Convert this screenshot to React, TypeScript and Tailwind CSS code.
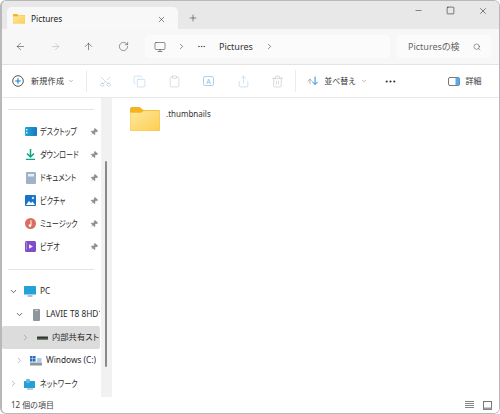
import React from "react";
import { ArrowLeft, ArrowRight, ArrowUp, RotateCw, ChevronRight, ChevronDown, Ellipsis, Search, X, Plus, Minus, Square, Scissors, Copy, Clipboard, Share, Trash2, Monitor, Pin } from "lucide-react";

const font = "[font-family:'Noto_Sans','Noto_Sans_CJK_JP',sans-serif] [font-feature-settings:'palt']";

function Folder({ s = 16 }: { s?: number }) {
  const h = (s * 24) / 30;
  const id = "fg" + s;
  return (
    <svg width={s} height={h} viewBox="0 0 30 24" className="shrink-0">
      <defs>
        <linearGradient id={id} x1="0" y1="0" x2="1" y2="1">
          <stop offset="0" stopColor="#ffe79c" />
          <stop offset="1" stopColor="#fdcf52" />
        </linearGradient>
      </defs>
      <path d="M0 2a2 2 0 0 1 2-2h7.5l4 3H28a2 2 0 0 1 2 2v4H0z" fill="#f5b31f" />
      <path d="M0 5.5 11 5.5 14 3.4H28.5A1.5 1.5 0 0 1 30 5V22.5A1.5 1.5 0 0 1 28.5 24H1.5A1.5 1.5 0 0 1 0 22.5Z" fill={`url(#${id})`} stroke="#f0bb3e" strokeWidth="0.6" />
    </svg>
  );
}

function PinMark({ className = "" }: { className?: string }) {
  return <Pin size={8} className={"text-[#8c8c8c] fill-[#8c8c8c] rotate-45 shrink-0 " + className} strokeWidth={1.5} />;
}

function NavItem({ icon, label }: { icon: React.ReactNode; label: string }) {
  return (
    <div className="h-[23px] flex items-center pl-[21px] shrink-0">
      <span className="w-[15px] flex justify-center shrink-0">{icon}</span>
      <span className="ml-[2px] w-[50px] shrink-0 text-[9px] text-[#2a2a2a] whitespace-nowrap origin-left scale-x-[0.79]">{label}</span>
      <PinMark />
    </div>
  );
}

function TreeItem({ chevron, indent, icon, label, selected, squeeze }: { chevron: "down" | "right"; indent: string; icon: React.ReactNode; label: string; selected?: boolean; squeeze?: boolean }) {
  return (
    <div className={"h-[23px] flex items-center shrink-0 rounded-[2px] " + indent + (selected ? " bg-[#dcdcdc]" : "")}>
      {chevron === "down" ? <ChevronDown size={9} className="text-[#333] shrink-0" strokeWidth={2} /> : <ChevronRight size={9} className="text-[#888] shrink-0" strokeWidth={1.5} />}
      <span className="w-[16px] ml-[4px] flex justify-center shrink-0">{icon}</span>
      <span className={"ml-[2px] text-[#2a2a2a] whitespace-nowrap " + (squeeze ? "text-[9px] origin-left scale-x-[0.79]" : "text-[8.3px] overflow-hidden")}>{label}</span>
    </div>
  );
}

export default function App() {
  return (
    <div className={"w-[500px] h-[414px] bg-white overflow-hidden " + font}>
      <div className="w-full h-full flex flex-col border border-[#b8b8b8] border-l-2 rounded-[6px] overflow-hidden bg-white">
        {/* title bar */}
        <div className="h-[28px] bg-[#e8e8e8] flex items-end shrink-0">
          <div className="ml-[5px] w-[171px] h-[22px] bg-[#f8f8f8] rounded-t-[5px] flex items-center pl-[6px] pr-[12px] pt-[2px]">
            <Folder s={12} />
            <span className="ml-[6px] text-[8.3px] text-[#222] flex-1">Pictures</span>
            <X size={9} className="text-[#333]" strokeWidth={1.5} />
          </div>
          <div className="ml-[10px] h-[22px] flex items-center">
            <Plus size={10} className="text-[#444]" strokeWidth={1.5} />
          </div>
          <div className="ml-auto self-start h-[19px] flex items-center pr-[11px] gap-[23px]">
            <Minus size={9} className="text-[#333]" strokeWidth={1.5} />
            <Square size={9} className="text-[#222]" strokeWidth={1.5} />
            <X size={10} className="text-[#222]" strokeWidth={1.3} />
          </div>
        </div>
        {/* address row */}
        <div className="h-[36px] bg-[#f7f7f7] border-b border-[#e3e3e3] flex items-center shrink-0">
          <div className="flex items-center w-[143px] shrink-0">
            <ArrowLeft size={11} className="ml-[13px] text-[#444]" strokeWidth={1.3} />
            <ArrowRight size={11} className="ml-[24px] text-[#b5b5b5]" strokeWidth={1.3} />
            <ArrowUp size={11} className="ml-[22px] text-[#444]" strokeWidth={1.3} />
            <RotateCw size={11} className="ml-[24px] text-[#555]" strokeWidth={1.3} />
          </div>
          <div className="h-[23px] w-[245px] bg-[#fbfbfb] rounded-[4px] flex items-center shrink-0">
            <Monitor size={12} className="ml-[9px] text-[#444]" strokeWidth={1.2} />
            <ChevronRight size={9} className="ml-[11px] text-[#333]" strokeWidth={1.5} />
            <Ellipsis size={9} className="ml-[11px] text-[#333]" strokeWidth={1.5} />
            <span className="ml-[13px] text-[9px] text-[#333]">Pictures</span>
            <ChevronRight size={9} className="ml-[12px] text-[#333]" strokeWidth={1.5} />
          </div>
          <div className="ml-[7px] h-[23px] w-[94px] bg-[#fbfbfb] rounded-[4px] flex items-center pl-[11px] shrink-0">
            <span className="text-[9px] text-[#666] flex-1 whitespace-nowrap">Picturesの検</span>
            <Search size={8} className="mr-[10px] text-[#444]" strokeWidth={1.5} />
          </div>
        </div>
        {/* command bar */}
        <div className="h-[33px] bg-white border-b border-[#e8e8e8] flex items-center shrink-0">
          <svg width="12" height="12" viewBox="0 0 12 12" className="ml-[10px] shrink-0">
            <circle cx="6" cy="6" r="5.3" fill="none" stroke="#444" strokeWidth="0.9" />
            <path d="M6 3.2v5.6M3.2 6h5.6" stroke="#0f7fd8" strokeWidth="1.1" />
          </svg>
          <span className="ml-[7px] text-[8px] text-[#333] tracking-[0.3px] whitespace-nowrap">新規作成</span>
          <ChevronDown size={6} className="ml-[4px] text-[#777]" />
          <div className="ml-[12px] w-px h-[22px] bg-[#ececec]" />
          <Scissors size={13} className="ml-[12px] text-[#9fc3e2] -rotate-90" strokeWidth={1} />
          <Copy size={13} className="ml-[21px] text-[#a8cbe8]" strokeWidth={1} />
          <Clipboard size={13} className="ml-[22px] text-[#b4c8d8]" strokeWidth={1} />
          <svg width="13" height="12" viewBox="0 0 12 12" className="ml-[21px]">
            <rect x="1" y="1.5" width="10" height="9" rx="1.5" fill="none" stroke="#a8cbe8" strokeWidth="0.9" />
            <text x="6" y="8.6" textAnchor="middle" fontSize="7" fill="#8fb9dc">A</text>
          </svg>
          <Share size={13} className="ml-[22px] text-[#a8cbe8]" strokeWidth={1} />
          <Trash2 size={13} className="ml-[21px] text-[#bbbbbb]" strokeWidth={1} />
          <div className="ml-[11px] w-px h-[22px] bg-[#ececec]" />
          <span className="ml-[10px] flex items-center w-[12px]">
            <ArrowUp size={9} className="text-[#555] -mr-[2px]" strokeWidth={1.3} />
            <svg width="7" height="10" viewBox="0 0 7 10"><path d="M3.5 0v9M.6 6l2.9 3 2.9-3" fill="none" stroke="#2488d8" strokeWidth="1.1" /></svg>
          </span>
          <span className="ml-[6px] text-[8px] text-[#333] whitespace-nowrap">並べ替え</span>
          <ChevronDown size={6} className="ml-[5px] text-[#777]" />
          <Ellipsis size={13} className="ml-[17px] text-[#333]" strokeWidth={2} />
          <svg width="12" height="9" viewBox="0 0 12 9" className="ml-[51px]">
            <rect x="0.5" y="0.5" width="11" height="8" rx="1.5" fill="none" stroke="#555" strokeWidth="0.8" />
            <path d="M7.5 .5h2.5A1.5 1.5 0 0 1 11.5 2v5A1.5 1.5 0 0 1 10 8.5H7.5z" fill="#5aa9e6" />
          </svg>
          <span className="ml-[6px] text-[8px] text-[#333] whitespace-nowrap">詳細</span>
        </div>
        {/* body */}
        <div className="flex-1 flex min-h-0">
          <div className="w-[99px] shrink-0 flex flex-col overflow-hidden pt-[11px] pr-[1px]">
            <div className="mx-[6px] h-px bg-[#e5e5e5] shrink-0 mb-[10px]" />
            <NavItem label="デスクトップ" icon={<svg width="12" height="9" viewBox="0 0 12 9"><defs><linearGradient id="d" x1="0" x2="1"><stop offset="0" stopColor="#27a6d8" /><stop offset="1" stopColor="#1578c4" /></linearGradient></defs><rect width="12" height="9" rx="1" fill="url(#d)" /><rect x="1" y="2" width="1.4" height="1.4" fill="#dff" /><rect x="1" y="5" width="1.4" height="1.4" fill="#dff" /></svg>} />
            <NavItem label="ダウンロード" icon={<svg width="11" height="11" viewBox="0 0 11 11"><path d="M5.5 0v7.5M2 4.5l3.5 3.5L9 4.5" fill="none" stroke="#10a37f" strokeWidth="1.5" /><path d="M1 10.3h9" stroke="#10a37f" strokeWidth="1.2" /></svg>} />
            <NavItem label="ドキュメント" icon={<svg width="10" height="12" viewBox="0 0 10 12"><rect width="10" height="12" rx="1" fill="#9fb2c8" /><rect x="2" y="2" width="6" height="2.5" fill="#e6edf4" /></svg>} />
            <NavItem label="ピクチャ" icon={<svg width="11" height="11" viewBox="0 0 11 11"><rect width="11" height="11" rx="1" fill="#1a73c9" /><path d="M1 10 4 6l2 2 1.5-1.5L10 10z" fill="#fff" /><circle cx="8" cy="3" r="1.2" fill="#bfe3fa" /></svg>} />
            <NavItem label="ミュージック" icon={<svg width="11" height="11" viewBox="0 0 11 11"><circle cx="5.5" cy="5.5" r="5.5" fill="#d9705e" /><path d="M6 2.3v5" stroke="#fff" strokeWidth="1" /><circle cx="5" cy="7.6" r="1.3" fill="#fff" /></svg>} />
            <NavItem label="ビデオ" icon={<svg width="11" height="11" viewBox="0 0 11 11"><rect width="11" height="11" rx="1.5" fill="#7f4bc9" /><path d="M4 3.2 8 5.5 4 7.8z" fill="#f2e8ff" /><path d="M1.5 1.5v8" stroke="#cbb0f0" strokeWidth="1.2" strokeDasharray="1 1" /></svg>} />
            <div className="mt-[11px] mx-[6px] h-px bg-[#e5e5e5] shrink-0 mb-[10px]" />
            <TreeItem chevron="down" indent="pl-[7px]" label="PC" icon={<svg width="12" height="11" viewBox="0 0 12 11"><rect width="12" height="8.5" rx=".6" fill="#22a2d6" /><rect x="3.5" y="9.4" width="5" height="1.2" fill="#7b9bad" /></svg>} />
            <TreeItem chevron="down" indent="pl-[13px]" label="LAVIE T8 8HD1" icon={<svg width="7" height="12" viewBox="0 0 7 12"><rect width="7" height="12" rx="1" fill="#8e979e" /><rect x="2" y="1" width="3" height=".8" fill="#d5dade" /></svg>} />
            <TreeItem chevron="right" indent="pl-[19px] text-[9px]" selected label="内部共有スト" icon={<svg width="11" height="4" viewBox="0 0 11 4"><rect y=".5" width="11" height="3" rx=".5" fill="#333" /><rect y="2.5" width="11" height="1" fill="#5a7a4a" /></svg>} />
            <TreeItem chevron="right" indent="pl-[13px]" label="Windows (C:)" icon={<svg width="12" height="10" viewBox="0 0 12 10"><g fill="#2b6fc4"><rect width="2.6" height="2.6" /><rect x="3" width="2.6" height="2.6" /><rect y="3" width="2.6" height="2.6" /><rect x="3" y="3" width="2.6" height="2.6" /></g><rect y="6.5" width="12" height="3" rx=".5" fill="#8a959d" /><rect x="7" y="2" width="4.5" height="4" rx=".5" fill="#aecbe4" /></svg>} />
            <TreeItem chevron="right" indent="pl-[7px]" squeeze label="ネットワーク" icon={<svg width="12" height="12" viewBox="0 0 12 12"><rect y="3" width="11" height="7" rx=".6" fill="#24a0d6" /><circle cx="4" cy="3" r="2.2" fill="#5fb9dc" /><rect x="3" y="10.5" width="6" height="1" fill="#7b9bad" /></svg>} />
          </div>
          <div className="w-[11px] shrink-0 bg-[#f1f1f1] flex justify-center pr-[1px] pt-[63px] pb-[30px]">
            <div className="w-[2px] h-full bg-[#8a8a8a] rounded-full" />
          </div>
          <div className="flex-1 bg-white flex items-start pl-[18px] pt-[9px]">
            <Folder s={30} />
            <span className="ml-[6px] mt-[1px] text-[8px] leading-[12px] text-[#333]">.thumbnails</span>
          </div>
        </div>
        {/* status bar */}
        <div className="h-[16px] bg-white flex items-center shrink-0 pl-[9px] pr-[7px]">
          <span className="text-[8px] text-[#444]">12 個の項目</span>
          <div className="ml-auto flex items-center gap-[9px]">
            <svg width="9" height="8" viewBox="0 0 9 8"><path d="M0 .5h9M0 2.5h9M0 4.5h9M0 6.5h9" stroke="#777" strokeWidth=".9" /></svg>
            <svg width="9" height="9" viewBox="0 0 9 9"><rect x=".5" y=".5" width="8" height="8" fill="none" stroke="#777" strokeWidth="1" /><rect x=".5" y="6.5" width="8" height="2" fill="#999" /></svg>
          </div>
        </div>
      </div>
    </div>
  );
}
